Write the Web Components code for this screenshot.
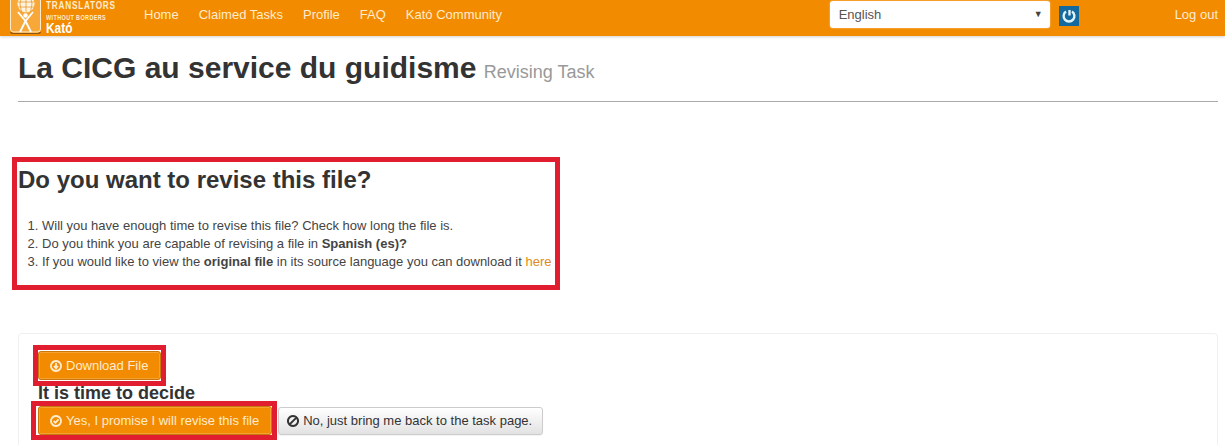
<!DOCTYPE html>
<html>
<head>
<meta charset="utf-8">
<title>Revising Task</title>
<style>
    html, body { margin: 0; padding: 0; background: #fff; overflow: hidden; }
    body { font-family: "Liberation Sans", Arial, sans-serif; color: #333; height: 445px; }
</style>
</head>
<body>

<template id="nav-bar-tpl">
    <style>
        :host {
            display: flex;
            align-items: flex-start;
            height: 36px;
            background: #f38b00;
            box-shadow: 0 1px 3px rgba(0, 0, 0, 0.18);
            color: #fff;
            font-size: 13px;
        }
        .logo { margin-left: 9px; width: 34px; height: 35px; flex: none; }
        .brand {
            width: 75px;
            margin-left: 3px;
            color: #fdeccf;
            font-weight: bold;
            display: flex;
            flex-direction: column;
            flex: none;
            white-space: nowrap;
        }
        .brand span { transform-origin: left center; display: block; }
        .b1 { font-size: 11px; letter-spacing: 1px; line-height: 9px; margin-top: 1px; transform: scaleX(0.75); }
        .b2 { font-size: 7px; letter-spacing: 0.5px; line-height: 7px; margin-top: 4px; transform: scaleX(0.78); }
        .b3 { font-size: 14px; line-height: 13px; color: #fff; margin-top: 1px; transform: scaleX(0.85); }
        nav { display: flex; gap: 20px; margin-left: 23px; line-height: 30px; color: #fdeccf; white-space: nowrap; }
        .right { margin-left: auto; display: flex; align-items: flex-start; }
        .lang {
            width: 220px;
            height: 27px;
            margin-top: 1px;
            box-sizing: border-box;
            background: #fff;
            border-radius: 3px;
            color: #555;
            font-size: 13px;
            line-height: 27px;
            padding: 0 7px 0 9px;
            display: flex;
            justify-content: space-between;
            box-shadow: 0 0 2px rgba(255, 255, 255, 0.6);
        }
        .caret { font-size: 9px; color: #444; }
        .power { width: 20px; height: 20px; margin: 6px 0 0 9px; display: block; }
        .logout { margin-left: 96px; margin-right: 7px; line-height: 29px; color: #fdeccf; white-space: nowrap; }
    </style>
    <svg class="logo" viewBox="0 0 34 35">
        <rect x="1.5" y="-4" width="30" height="36" rx="3" fill="#f7a838" stroke="#fdeccf" stroke-width="1"/>
        <path d="M1.5 32 Q2 33.5 4 33.5 H29 Q31 33.5 31.5 32" fill="none" stroke="#8a5510" stroke-width="1.2"/>
        <circle cx="17" cy="4" r="8.5" fill="#fdf3df"/>
        <path d="M9 2 H25 M9 7 H25 M17 -4 V12.5 M12.5 -4 Q9.5 4 12.5 12 M21.5 -4 Q24.5 4 21.5 12" fill="none" stroke="#e89a2c" stroke-width="0.8"/>
        <path d="M9 12 L16.5 21 L24 12 M16.5 21 L11 32 M16.5 21 L22 32" fill="none" stroke="#fff" stroke-width="1.8"/>
        <circle cx="16.5" cy="15.5" r="2.2" fill="#fff"/>
    </svg>
    <div class="brand">
        <span class="b1">TRANSLATORS</span>
        <span class="b2">WITHOUT BORDERS</span>
        <span class="b3">Kató</span>
    </div>
    <nav><slot></slot></nav>
    <div class="right">
        <div class="lang"><span>English</span><span class="caret">▼</span></div>
        <svg class="power" viewBox="0 0 20 20">
            <rect width="20" height="20" fill="#14699f"/>
            <path d="M7 5.6 A5.4 5.4 0 1 0 13 5.6" fill="none" stroke="#dff3fb" stroke-width="2.4"/>
            <path d="M10.5 4 V9.5" stroke="#dff3fb" stroke-width="2.4"/>
        </svg>
        <span class="logout">Log out</span>
    </div>
</template>

<template id="page-title-tpl">
    <style>
        :host {
            display: block;
            margin: 0 7px 0 18px;
            padding: 14px 0 11px;
            border-bottom: 1px solid #aaa;
            line-height: 36px;
        }
        h1 { margin: 0; font-size: 30px; font-weight: bold; color: #333; line-height: 36px; }
        small { font-size: 18px; font-weight: normal; color: #999; margin-left: -1px; }
    </style>
    <h1><slot></slot> <small><slot name="sub"></slot></small></h1>
</template>

<template id="red-box-tpl">
    <style>
        :host { display: block; width: fit-content; border: 5px solid #e01e2f; box-sizing: border-box; }
    </style>
    <slot></slot>
</template>

<template id="task-question-tpl">
    <style>
        :host { display: block; width: 538px; height: 123px; box-sizing: border-box; padding: 4px 0 0 1px; color: #333; font-size: 13px; }
        h2 { margin: 0; font-size: 24px; line-height: 28px; font-weight: bold; color: #333; }
        ol { margin: 23px 0 0; padding-left: 24px; line-height: 18px; color: #444; }
    </style>
    <h2><slot name="title"></slot></h2>
    <ol><slot></slot></ol>
</template>

<template id="btn-tpl">
    <style>
        :host {
            display: inline-flex;
            align-items: center;
            height: 29px;
            box-sizing: border-box;
            padding: 0 12px 0 11px;
            gap: 4px;
            border-radius: 3px;
            font-size: 13px;
            white-space: nowrap;
            background: #f38b00;
            color: #fdeccf;
            border: 1px solid #c9760a;
            box-shadow: inset 0 0 0 1px rgba(255, 255, 255, 0.2);
        }
        :host([plain]) {
            background: linear-gradient(#fff, #e2e2e2);
            color: #333;
            border: 1px solid #ccc;
            box-shadow: 0 1px 1px rgba(0, 0, 0, 0.05);
            padding: 0 10px 0 8px;
            height: 28px;
        }
        svg { width: 12px; height: 12px; flex: none; }
        :host([plain]) svg path { stroke-width: 2; }
    </style>
    <svg viewBox="0 0 12 12"><path id="ic" fill="none" stroke="currentColor" stroke-width="1.8"/></svg>
    <slot></slot>
</template>

<template id="decide-panel-tpl">
    <style>
        :host {
            display: block;
            margin: 43px 7px 0 18px;
            height: 130px;
            box-sizing: border-box;
            padding: 11px 0 0 14px;
            border: 1px solid #f0f0f0;
            border-radius: 4px;
            box-shadow: 0 1px 1px rgba(0, 0, 0, 0.02);
        }
        h3 { margin: -1px 0 0 5px; font-size: 18px; line-height: 17px; font-weight: bold; color: #333; }
        .row { display: flex; align-items: center; gap: 1px; margin: -1px 0 0 -2px; }
    </style>
    <slot name="download"></slot>
    <h3><slot name="title"></slot></h3>
    <div class="row"><slot name="actions"></slot></div>
</template>

<nav-bar>
    <span>Home</span><span>Claimed Tasks</span><span>Profile</span><span>FAQ</span><span>Kató Community</span>
</nav-bar>

<page-title>La CICG au service du guidisme<span slot="sub">Revising Task</span></page-title>

<red-box style="margin: 55px 0 0 12px;">
    <task-question>
        <span slot="title">Do you want to revise this file?</span>
        <li>Will you have enough time to revise this file? Check how long the file is.</li>
        <li>Do you think you are capable of revising a file in <b>Spanish (es)?</b></li>
        <li>If you would like to view the <b>original file</b> in its source language you can download it <a style="color:#e08a1e">here</a></li>
    </task-question>
</red-box>

<decide-panel>
    <red-box slot="download" style="padding:1px 0 1px;"><x-btn icon="down" style="display:flex;">Download File</x-btn></red-box>
    <span slot="title">It is time to decide</span>
    <red-box slot="actions" style="padding-left:2px;"><x-btn icon="ok" style="display:flex;">Yes, I promise I will revise this file</x-btn></red-box>
    <x-btn slot="actions" icon="ban" plain>No, just bring me back to the task page.</x-btn>
</decide-panel>

<script>
    const ICONS = {
        down: 'M6 1 A5 5 0 1 1 5.99 1 Z M6 3 V8 M4 6 L6 8.3 L8 6',
        ok: 'M6 1 A5 5 0 1 1 5.99 1 Z M3.6 6 L5.4 7.8 L8.5 4.4',
        ban: 'M6 1 A5 5 0 1 1 5.99 1 Z M2.6 9.4 L9.4 2.6'
    };

    function simple(name, tplId, init) {
        customElements.define(name, class extends HTMLElement {
            constructor() {
                super();
                this.attachShadow({ mode: 'open' });
                this.shadowRoot.appendChild(document.getElementById(tplId).content.cloneNode(true));
            }
            connectedCallback() {
                if (init) init(this);
            }
        });
    }

    simple('nav-bar', 'nav-bar-tpl');
    simple('page-title', 'page-title-tpl');
    simple('red-box', 'red-box-tpl');
    simple('task-question', 'task-question-tpl');
    simple('decide-panel', 'decide-panel-tpl');
    simple('x-btn', 'btn-tpl', el => {
        el.shadowRoot.getElementById('ic').setAttribute('d', ICONS[el.getAttribute('icon')]);
    });
</script>
</body>
</html>
